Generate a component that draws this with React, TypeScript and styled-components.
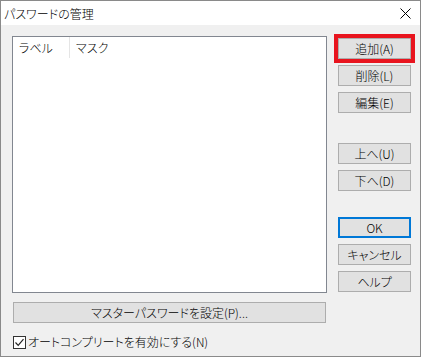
import React from "react";
import styled, { createGlobalStyle } from "styled-components";

const Global = createGlobalStyle`
  html, body { margin: 0; padding: 0; background: #f0f0f0; }
  body {
    font-family: "Noto Sans CJK JP", "Noto Sans", sans-serif;
    font-size: 12px;
    font-weight: 300;
    color: #000;
    font-feature-settings: "palt";
  }
  * { box-sizing: border-box; }
`;

const Window = styled.div`
  width: 421px;
  height: 357px;
  border: 1px solid #8a8a8a;
  background: #f0f0f0;
  display: flex;
  flex-direction: column;
`;

const TitleBar = styled.div`
  height: 24px;
  flex: none;
  background: #fff;
  display: flex;
  align-items: center;
  justify-content: space-between;
  padding: 0 9px 0 3px;
  font-size: 12px;
  line-height: 24px;
`;

const TitleText = styled.span`
  padding-top: 1px;
`;

const CloseIcon = styled.svg`
  width: 11px;
  height: 11px;
  display: block;
  margin-top: 1px;
`;

const Body = styled.div`
  flex: 1;
  padding: 11px 9px 0 11px;
  display: flex;
  flex-direction: column;
`;

const MainRow = styled.div`
  display: flex;
  gap: 11px;
`;

const LeftCol = styled.div`
  width: 315px;
  display: flex;
  flex-direction: column;
`;

const ListBox = styled.div`
  height: 257px;
  background: #fff;
  border: 1px solid #828790;
`;

const HeaderRow = styled.div`
  display: flex;
  height: 21px;
  align-items: stretch;
`;

const HeaderCell = styled.div<{ $w?: number; $sep?: boolean }>`
  width: ${(p) => (p.$w ? `${p.$w}px` : "auto")};
  flex: ${(p) => (p.$w ? "none" : "1")};
  padding-left: 6px;
  line-height: 21px;
  border-right: ${(p) => (p.$sep ? "1px solid #e5e5e5" : "none")};
`;

const Button = styled.button<{ $default?: boolean; $highlight?: boolean; $mt?: number }>`
  font: inherit;
  font-feature-settings: "palt";
  color: #000;
  background: #e1e1e1;
  border: ${(p) => (p.$default ? "2px solid #0078d7" : "1px solid #adadad")};
  height: 21px;
  padding: 0;
  line-height: 18px;
  margin-top: ${(p) => p.$mt ?? 0}px;
  outline: ${(p) => (p.$highlight ? "4px solid #e8141e" : "none")};
  outline-offset: 0;
  cursor: default;
`;

const MasterButton = styled(Button)`
  margin: 9px 1px 0 1px;
  width: 313px;
`;

const RightCol = styled.div`
  width: 73px;
  padding-top: 2px;
  display: flex;
  flex-direction: column;
  gap: 6px;
`;

const SideButton = styled(Button)`
  width: 73px;
`;

const CheckRow = styled.label`
  display: flex;
  align-items: center;
  gap: 2px;
  margin-top: 12px;
  margin-left: 1px;
  line-height: 14px;
`;

const CheckBox = styled.span`
  width: 13px;
  height: 13px;
  border: 1px solid #333;
  background: #fff;
  display: flex;
  align-items: center;
  justify-content: center;
  flex: none;
`;

export default function App() {
  return (
    <>
      <Global />
      <Window>
        <TitleBar>
          <TitleText>パスワードの管理</TitleText>
          <CloseIcon viewBox="0 0 11 11">
            <path d="M0.5 0.5 L10.5 10.5 M10.5 0.5 L0.5 10.5" stroke="#000" strokeWidth="1" fill="none" />
          </CloseIcon>
        </TitleBar>
        <Body>
          <MainRow>
            <LeftCol>
              <ListBox>
                <HeaderRow>
                  <HeaderCell $w={57} $sep>ラベル</HeaderCell>
                  <HeaderCell>マスク</HeaderCell>
                </HeaderRow>
              </ListBox>
              <MasterButton>マスターパスワードを設定(P)...</MasterButton>
            </LeftCol>
            <RightCol>
              <SideButton $highlight>追加(A)</SideButton>
              <SideButton>削除(L)</SideButton>
              <SideButton>編集(E)</SideButton>
              <SideButton $mt={24}>上へ(U)</SideButton>
              <SideButton>下へ(D)</SideButton>
              <SideButton $default $mt={20}>OK</SideButton>
              <SideButton>キャンセル</SideButton>
              <SideButton>ヘルプ</SideButton>
            </RightCol>
          </MainRow>
          <CheckRow>
            <CheckBox>
              <svg width="11" height="11" viewBox="0 0 11 11">
                <polyline points="1.5,5.5 4.2,8.3 9.5,2.2" stroke="#222" strokeWidth="1.2" fill="none" />
              </svg>
            </CheckBox>
            <span>オートコンプリートを有効にする(N)</span>
          </CheckRow>
        </Body>
      </Window>
    </>
  );
}
